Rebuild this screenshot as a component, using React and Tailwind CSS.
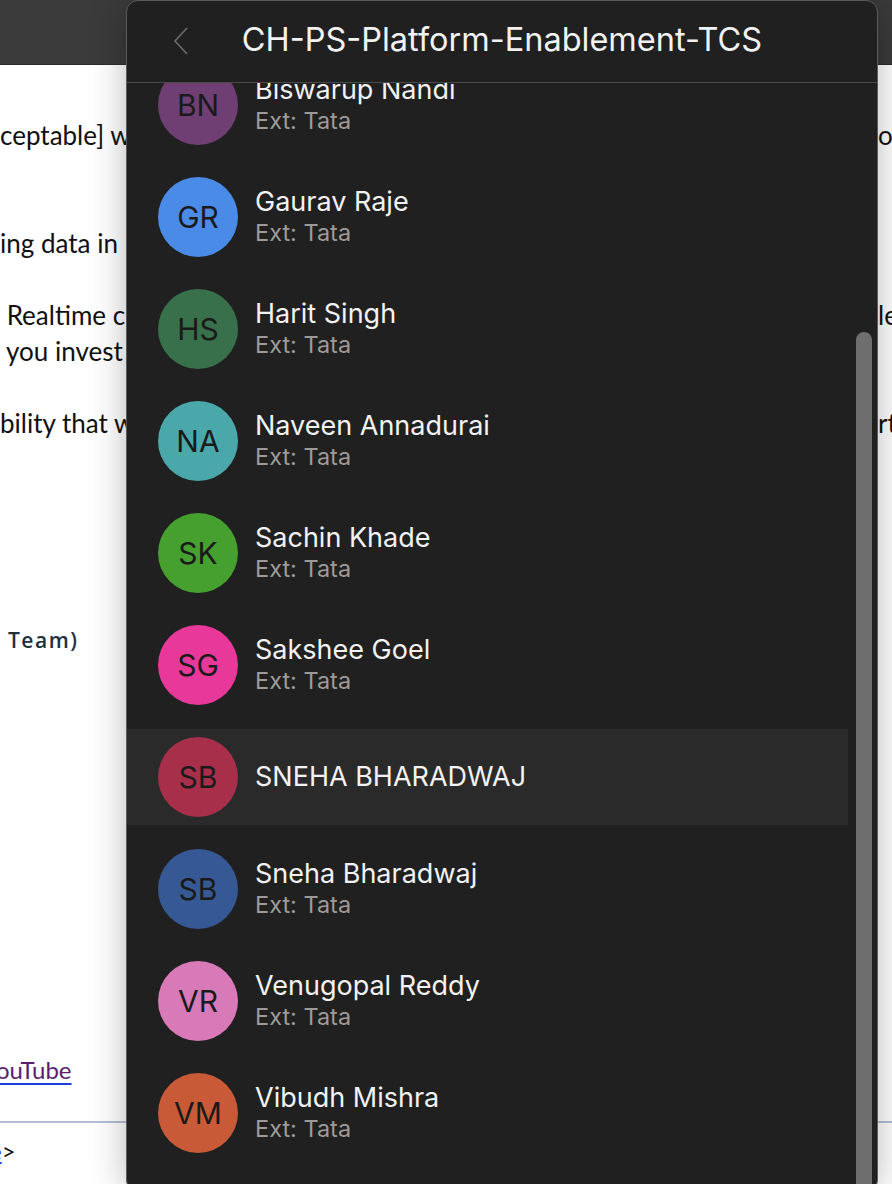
import React from 'react';

const miembros = [
    { ini: 'BN', nombre: 'Biswarup Nandi', color: 'bg-[#6f3f74]', ext: true },
    { ini: 'GR', nombre: 'Gaurav Raje', color: 'bg-[#4a8be8]', ext: true },
    { ini: 'HS', nombre: 'Harit Singh', color: 'bg-[#37704a]', ext: true },
    { ini: 'NA', nombre: 'Naveen Annadurai', color: 'bg-[#4aa8aa]', ext: true },
    { ini: 'SK', nombre: 'Sachin Khade', color: 'bg-[#46a030]', ext: true },
    { ini: 'SG', nombre: 'Sakshee Goel', color: 'bg-[#e8399a]', ext: true },
    { ini: 'SB', nombre: 'SNEHA BHARADWAJ', color: 'bg-[#a82f4a]', ext: false, activo: true },
    { ini: 'SB', nombre: 'Sneha Bharadwaj', color: 'bg-[#365894]', ext: true },
    { ini: 'VR', nombre: 'Venugopal Reddy', color: 'bg-[#d87ab8]', ext: true },
    { ini: 'VM', nombre: 'Vibudh Mishra', color: 'bg-[#c85a38]', ext: true },
];

const Fila = ({ m }) => (
    <div className={`h-[96px] mb-[16px] flex items-center pl-[31px] ${m.activo ? 'bg-[#2a2a2a]' : ''}`}>
        <div className={`w-[80px] h-[80px] rounded-full ${m.color} flex items-center justify-center text-[30px] text-[#1a1a1a] shrink-0`}>
            {m.ini}
        </div>
        <div className="ml-[17px] flex flex-col">
            <span className="text-[27px] leading-[32px] text-[#f2f2f2]">{m.nombre}</span>
            {m.ext && <span className="text-[23.5px] leading-[30px] text-[#9b9b9b]">Ext: Tata</span>}
        </div>
    </div>
);

const Linea = ({ izq, der, className = '' }) => (
    <div className={`grid grid-cols-[878px_1fr] h-[36px] leading-[36px] whitespace-nowrap ${className}`}>
        <span className="whitespace-pre">{izq}</span>
        <span>{der}</span>
    </div>
);

export default function App() {
    return (
        <div className="relative w-[892px] h-[1184px] overflow-hidden bg-white" style={{ fontFamily: 'Lato, sans-serif' }}>
            {/* barra superior */}
            <div className="h-[65px] bg-[#3b3b3b] border-b border-[#2c2c2c]" />

            {/* cuerpo del correo */}
            <div className="flex flex-col text-[26px] text-[#111]">
                <Linea className="mt-[52px]" izq="ceptable] w" der="ow" />
                <Linea className="mt-[72px]" izq="ing data in" der="" />
                <Linea className="mt-[36px]" izq=" Realtime c" der="le" />
                <Linea izq=" you invest" der="" />
                <Linea className="mt-[36px]" izq="bility that w" der="rt" />
                <div className="mt-[181px] h-[36px] leading-[36px] pl-[8px] text-[21px] font-semibold tracking-[1.5px] text-[#1d3142]" style={{ fontFamily: '"Open Sans", sans-serif' }}>
                    Team)
                </div>
                <div className="mt-[394px] h-[36px] leading-[36px] text-[24px]">
                    <span className="text-[#5b1e6f] underline decoration-[#1d3fe0] decoration-2 underline-offset-[4px] -ml-[4px]">ouTube</span>
                </div>
                <div className="mt-[33px] h-[2px] bg-[#b3bfd6]" />
                <div className="mt-[10px] h-[36px] leading-[36px] text-[24px]">
                    <span className="text-[#1d3fe0] underline -ml-[11px]">e</span>
                    <span>&gt;</span>
                </div>
            </div>

            {/* panel de miembros */}
            <div
                className="absolute left-[126px] top-0 w-[752px] h-[1192px] rounded-[12px] border border-[#5a5a5a] bg-[#202020] shadow-[0_0_36px_rgba(0,0,0,0.28)] flex flex-col overflow-hidden"
                style={{ fontFamily: 'Inter, "Noto Sans", sans-serif' }}
            >
                <div className="h-[82px] shrink-0 relative flex items-center justify-center border-b border-[#4a4a4a]">
                    <svg className="absolute left-[46px] top-[26px]" width="16" height="28" viewBox="0 0 16 28" fill="none">
                        <path d="M14 1 L2 14 L14 27" stroke="#6c6c6c" strokeWidth="1.6" />
                    </svg>
                    <h1 className="text-[32.5px] text-[#f2f2f2] -mt-[2px]">CH-PS-Platform-Enablement-TCS</h1>
                </div>
                <div className="flex flex-1 overflow-hidden">
                    <div className="w-[721px] overflow-hidden">
                        <div className="-mt-[26px]">
                            {miembros.map((m, i) => <Fila key={i} m={m} />)}
                        </div>
                    </div>
                    <div className="flex-1 pl-[8px] pt-[249px]">
                        <div className="w-[16px] h-full bg-[#6e6e6e] rounded-t-[8px]" />
                    </div>
                </div>
            </div>
        </div>
    );
}
